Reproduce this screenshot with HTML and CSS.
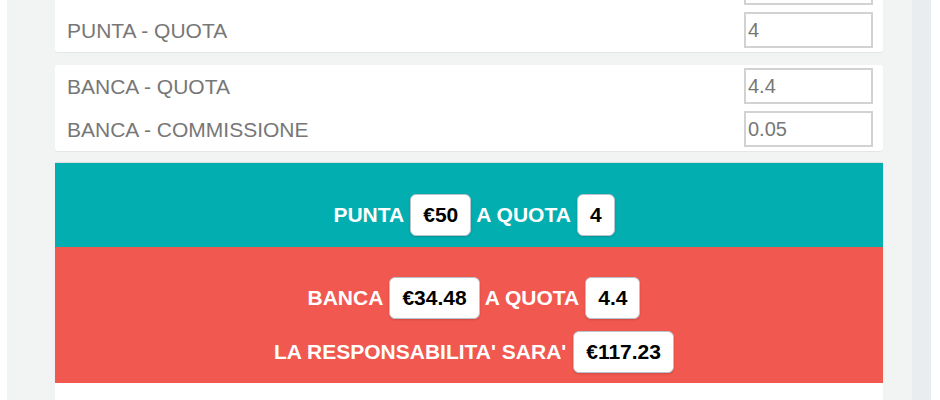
FILE: index.html
```html
<!DOCTYPE html>
<html lang="it">

<head>
    <meta charset="UTF-8">
    <meta name="viewport" content="width=device-width, initial-scale=1.0">
    <title>Calcolatore Punta e Banca</title>

    <link rel="stylesheet" href="styles.css">
</head>

<body>
    <div class="page">
        <main class="content">
            <section class="card">
                <label class="row">PUNTA - IMPORTO
                    <input type="text" value="50">
                </label>
                <label class="row">PUNTA - QUOTA
                    <input type="text" value="4">
                </label>
            </section>

            <section class="card">
                <label class="row">BANCA - QUOTA
                    <input type="text" value="4.4">
                </label>
                <label class="row">BANCA - COMMISSIONE
                    <input type="text" value="0.05">
                </label>
            </section>

            <section class="card result">
                <div class="band back">
                    <p>PUNTA <b>€50</b> A QUOTA <b>4</b></p>
                </div>
                <div class="band lay">
                    <p>BANCA <b>€34.48</b> A QUOTA <b>4.4</b></p>
                    <p>LA RESPONSABILITA' SARA' <b>€117.23</b></p>
                </div>
                <div class="result-foot"></div>
            </section>
        </main>
        <aside class="strip"></aside>
    </div>
</body>

</html>
```

FILE: styles.css
```css
html,
body {
    margin: 0;
    background: #fff;
    font-family: "Liberation Sans", Arial, Helvetica, sans-serif;
    overflow: hidden;
}

.page {
    display: flex;
    height: 400px;
    margin-left: 7px;
    margin-right: 9px;
}

.content {
    flex: 1;
    display: flex;
    flex-direction: column;
    gap: 12px;
    padding: 0 29px 0 48px;
    margin-top: -34px;
    background: #f2f3f3;
}

.strip {
    width: 19px;
    background: #e9edf0;
}

.card {
    display: flex;
    flex-direction: column;
    gap: 7px;
    padding: 3px 10px 4px 12px;
    background: #fff;
    border-radius: 3px;
    box-shadow: 0 1px 1px rgba(0, 0, 0, .06);
}

.card + .card {
    margin-top: 1px;
}

.row {
    display: flex;
    align-items: center;
    justify-content: space-between;
    font-size: 21px;
    line-height: 1;
    color: #777;
}

.row input {
    box-sizing: border-box;
    width: 129px;
    height: 36px;
    padding: 0 2px;
    border: 2px solid #d2d2d2;
    font: inherit;
    font-size: 20px;
    color: #777;
    background: #fff;
}

.result {
    gap: 0;
    padding: 0;
    border-top: 1px solid #dedede;
    border-radius: 0;
}

.card + .result {
    margin-top: -1px;
}

.band {
    display: flex;
    flex-direction: column;
    gap: 12px;
    padding: 30px 0 10px 10px;
    color: #fff;
    font-size: 21px;
    font-weight: bold;
    text-align: center;
}

.band p {
    margin: 0;
    line-height: 42px;
}

.band b {
    display: inline-block;
    box-sizing: border-box;
    height: 42px;
    padding: 0 12px;
    margin-left: 1px;
    line-height: 40px;
    color: #000;
    background: #fff;
    border: 1px solid #b9c3cc;
    border-radius: 6px;
    box-shadow: 0 1px 2px rgba(0, 0, 0, .15);
    vertical-align: top;
}

.back {
    background: #02aeb0;
    padding-top: 31px;
    padding-bottom: 11px;
}

.lay {
    background: #f1584f;
}

.result-foot {
    height: 40px;
}
```
